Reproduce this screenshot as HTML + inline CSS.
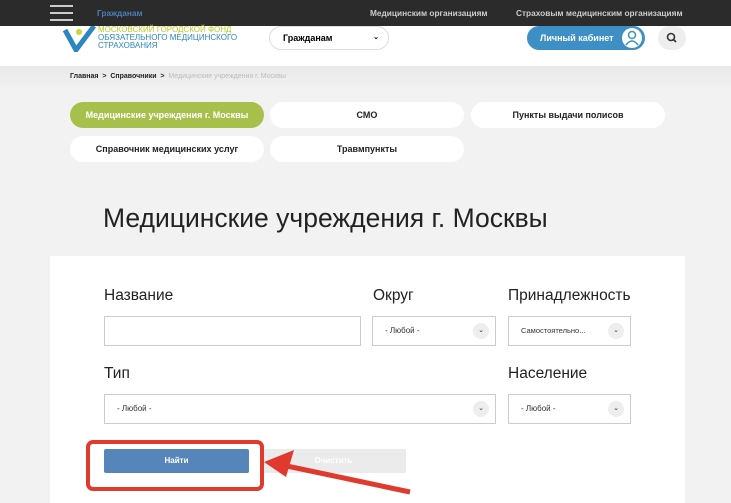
<!DOCTYPE html>
<html><head><meta charset="utf-8"><style>
*{margin:0;padding:0;box-sizing:border-box}
body{width:731px;height:503px;overflow:hidden;background:#f2f2f2;font-family:"Liberation Sans",sans-serif;position:relative}
.a{position:absolute}
.top{left:0;top:0;width:731px;height:26px;background:#2b2b2b}
.top span{position:absolute;top:8px;font-size:8.3px;color:#ccc;font-weight:bold}
.hdr{left:0;top:26px;width:731px;height:40px;background:#fff}
.tab{position:absolute;height:26px;border-radius:13px;background:#fff;font-size:9px;font-weight:bold;color:#222;text-align:center;line-height:26px}
.lbl{position:absolute;font-size:15.5px;color:#222}
.box{position:absolute;height:30px;border:1px solid #ccc;background:#fff;font-size:8px;color:#333;line-height:28px;padding-left:12px}
.dd{position:absolute;right:6px;top:6px;width:16px;height:16px;border-radius:50%;background:#eee;font-size:7px;line-height:16px;text-align:center;padding:0}
</style></head><body>
<div class="a" style="left:0;top:66px;width:731px;height:24px;background:linear-gradient(#e8e8e8,#f2f2f2)"></div>
<div class="a top">
 <div class="a" style="left:50px;top:5px;width:23px;height:2px;background:#ccc"></div>
 <div class="a" style="left:50px;top:12px;width:23px;height:2px;background:#ccc"></div>
 <div class="a" style="left:50px;top:19px;width:23px;height:2px;background:#ccc"></div>
 <span style="left:97px;color:#4a7fb5">Гражданам</span>
 <span style="left:370px">Медицинским организациям</span>
 <span style="left:516px">Страховым медицинским организациям</span>
</div>
<div class="a hdr">
 <svg class="a" style="left:62px;top:0" width="34" height="26"><path d="M3 4 L14 24 L32 0" stroke="#2e86c1" stroke-width="5" fill="none"/><circle cx="17" cy="6" r="3" fill="#c5d930"/></svg>
 <div class="a" style="left:98px;top:0;font-size:8px;line-height:8px;color:#2e86c1"><span style="color:#b8cc2a">МОСКОВСКИЙ ГОРОДСКОЙ ФОНД</span><br>ОБЯЗАТЕЛЬНОГО МЕДИЦИНСКОГО<br>СТРАХОВАНИЯ</div>
 <div class="a" style="left:269px;top:0;width:120px;height:24px;border:1px solid #ddd;border-radius:12px;background:#fff;font-size:9px;font-weight:bold;line-height:22px;padding-left:13px">Гражданам<span style="position:absolute;right:9px;font-size:7px">&#8964;</span></div>
 <div class="a" style="left:527px;top:0;width:118px;height:24px;border-radius:12px;background:#3d8fc6;color:#fff;font-size:9px;font-weight:bold;line-height:24px;padding-left:13px">Личный кабинет<div class="a" style="right:3px;top:2px;width:20px;height:20px;border-radius:50%;background:#fff"><svg width="20" height="20"><circle cx="10" cy="7" r="3.5" stroke="#3d8fc6" stroke-width="1.5" fill="none"/><path d="M4 17 Q10 9 16 17" stroke="#3d8fc6" stroke-width="1.5" fill="none"/></svg></div></div>
 <div class="a" style="left:658px;top:0;width:28px;height:24px;border-radius:12px;background:#eee"><svg width="28" height="24"><circle cx="13" cy="11" r="3.5" stroke="#333" stroke-width="1.6" fill="none"/><path d="M15.5 13.5 L18 16" stroke="#333" stroke-width="1.8"/></svg></div>
</div>
<div class="a" style="left:70px;top:73px;font-size:7px;color:#222;font-weight:bold">Главная &nbsp;&gt;&nbsp; Справочники &nbsp;&gt;&nbsp; <span style="color:#bbb;font-weight:normal">Медицинские учреждения г. Москвы</span></div>
<div class="tab" style="left:70px;top:102px;width:194px;background:#a7c04c;color:#fff">Медицинские учреждения г. Москвы</div>
<div class="tab" style="left:270px;top:102px;width:194px">СМО</div>
<div class="tab" style="left:471px;top:102px;width:194px">Пункты выдачи полисов</div>
<div class="tab" style="left:70px;top:136px;width:194px">Справочник медицинских услуг</div>
<div class="tab" style="left:270px;top:136px;width:194px">Травмпункты</div>
<div class="a" style="left:103px;top:203px;font-size:26.5px;color:#222">Медицинские учреждения г. Москвы</div>
<div class="a" style="left:50px;top:256px;width:635px;height:247px;background:#fff"></div>
<div class="lbl" style="left:104px;top:287px">Название</div>
<div class="lbl" style="left:373px;top:287px">Округ</div>
<div class="lbl" style="left:508px;top:287px">Принадлежность</div>
<div class="box" style="left:104px;top:316px;width:257px"></div>
<div class="box" style="left:372px;top:316px;width:124px">- Любой -<div class="dd">&#8964;</div></div>
<div class="box" style="left:508px;top:316px;width:123px;font-size:7.5px">Самостоятельно...<div class="dd">&#8964;</div></div>
<div class="lbl" style="left:104px;top:365px">Тип</div>
<div class="lbl" style="left:508px;top:365px">Население</div>
<div class="box" style="left:104px;top:394px;width:392px">- Любой -<div class="dd">&#8964;</div></div>
<div class="box" style="left:508px;top:394px;width:123px">- Любой -<div class="dd">&#8964;</div></div>
<div class="a" style="left:104px;top:449px;width:145px;height:24px;background:#5686b9;border-radius:2px;color:#fff;font-size:8px;font-weight:bold;text-align:center;line-height:24px">Найти</div>
<div class="a" style="left:261px;top:449px;width:145px;height:24px;background:#ebebeb;border-radius:2px;color:#fff;font-size:8px;font-weight:bold;text-align:center;line-height:24px">Очистить</div>
<div class="a" style="left:86px;top:440px;width:178px;height:51px;border:4px solid #e03a2f;border-radius:7px"></div>
<svg class="a" style="left:260px;top:450px" width="160" height="50"><path d="M150 42 L22 15" stroke="#e03a2f" stroke-width="5"/><path d="M4 12 L34 0 L26 27 Z" fill="#e03a2f"/></svg>
</body></html>
